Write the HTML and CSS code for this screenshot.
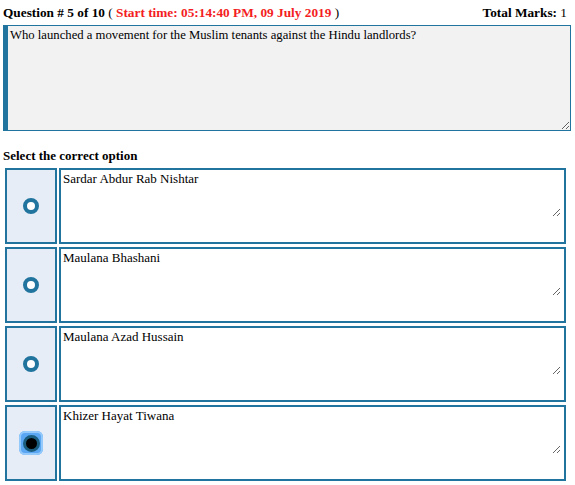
FILE: index.html
```html
<!DOCTYPE html>
<html lang="en">
<head>
    <meta charset="UTF-8">
    <meta name="viewport" content="width=device-width, initial-scale=1.0">
    <title>Quiz</title>
    <link rel="stylesheet" href="styles.css">
</head>
<body>
    <div id="quiz">
        <div class="q-head">
            <div><b>Question # 5 of 10</b> ( <b class="q-time">Start time: 05:14:40 PM, 09 July 2019</b> )</div>
            <div><b>Total Marks:</b> 1</div>
        </div>
        <textarea class="q-text">Who launched a movement for the Muslim tenants against the Hindu landlords?</textarea>

        <div class="opt-title">Select the correct option</div>

        <div class="opt">
            <label class="opt-radio"><span class="radio-wrap"><input type="radio" name="ans"></span></label>
            <div class="opt-text"><textarea>Sardar Abdur Rab Nishtar</textarea></div>
        </div>
        <div class="opt">
            <label class="opt-radio"><span class="radio-wrap"><input type="radio" name="ans"></span></label>
            <div class="opt-text"><textarea>Maulana Bhashani</textarea></div>
        </div>
        <div class="opt">
            <label class="opt-radio"><span class="radio-wrap"><input type="radio" name="ans"></span></label>
            <div class="opt-text"><textarea>Maulana Azad Hussain</textarea></div>
        </div>
        <div class="opt">
            <label class="opt-radio"><span class="radio-wrap focus"><input type="radio" name="ans" checked></span></label>
            <div class="opt-text"><textarea>Khizer Hayat Tiwana</textarea></div>
        </div>
    </div>
</body>
</html>
```

FILE: styles.css
```css
*{
    box-sizing: border-box;
    padding: 0;
    margin: 0;
}

body{
    font-family: "Liberation Serif", "Times New Roman", serif;
    font-size: 13px;
    color: #000;
    background: #fff;
}

#quiz{
    padding: 4px 4px 0 3px;
}

.q-head{
    display: flex;
    justify-content: space-between;
    font-size: 13.3px;
    line-height: 17px;
    padding-right: 4px;
}
.q-time{
    color: #f31d23;
}

textarea{
    display: block;
    font-family: "Liberation Serif", "Times New Roman", serif;
    font-size: 13px;
    line-height: 15px;
    color: #000;
    outline: none;
}

.q-text{
    width: 568px;
    height: 106px;
    margin-top: 4px;
    border: 1px solid #21749e;
    border-left: 5px solid #21749e;
    background: #f2f2f2;
    padding: 2px 2px;
    font-size: 12.7px;
}

.opt-title{
    font-weight: bold;
    font-size: 13px;
    line-height: 16px;
    margin-top: 17px;
    margin-bottom: 4px;
}

.opt{
    display: flex;
    gap: 2px;
    margin-left: 2px;
    margin-bottom: 3px;
    height: 76px;
}
.opt-radio{
    width: 52px;
    border: 2px solid #21749e;
    background: #e6edf7;
    display: flex;
    align-items: center;
    justify-content: center;
}
.opt-text{
    width: 507px;
    height: 100%;
    border: 2px solid #21749e;
    background: #fff;
}
.opt-text textarea{
    width: 500px;
    height: 47px;
    border: none;
    background: transparent;
    padding: 1px 2px;
}

.radio-wrap{
    display: flex;
    align-items: center;
    justify-content: center;
    width: 24px;
    height: 24px;
    border-radius: 6px;
}
.radio-wrap.focus{
    background: #5aa6f2;
    box-shadow: inset 0 0 0 2px #94cafb;
}

.opt-radio input{
    appearance: none;
    -webkit-appearance: none;
    width: 16px;
    height: 16px;
    border-radius: 50%;
    border: 4px solid #21749e;
    background: #fff;
}
.opt-radio input:checked{
    width: 17px;
    height: 17px;
    background: #000;
    border: 3px solid #1a5d7e;
}
```
